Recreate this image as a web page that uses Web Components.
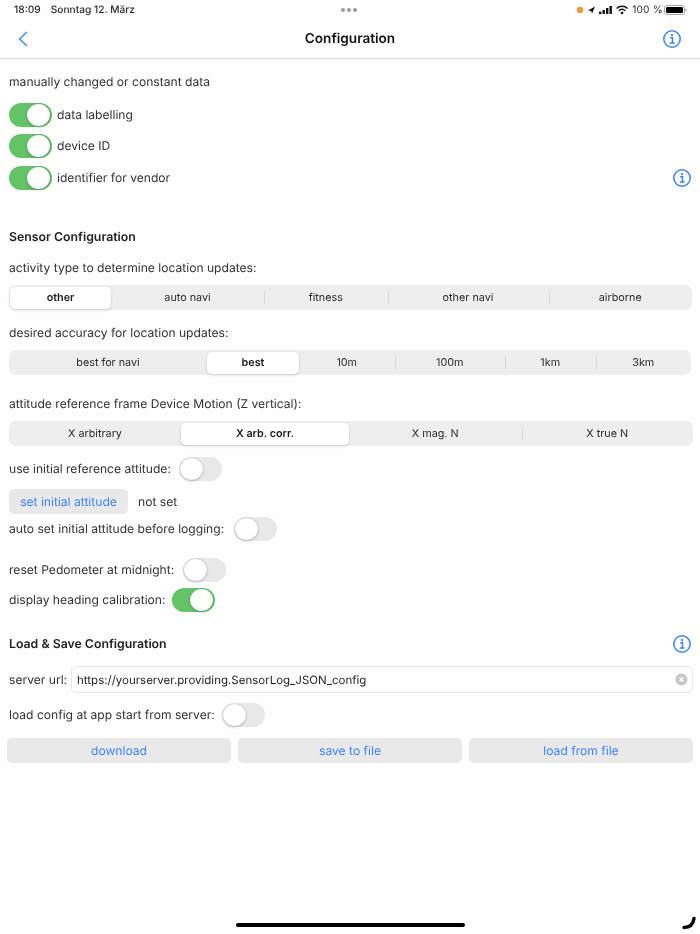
<!DOCTYPE html>
<html lang="de">
<head>
<meta charset="utf-8">
<title>Configuration</title>
<style>
  html, body { margin: 0; padding: 0; background: #fefefe; }
  body {
    width: 700px;
    height: 934px;
    overflow: hidden;
    position: relative;
    font-family: Inter, "Liberation Sans", sans-serif;
    font-size: 12.1px;
    color: #333;
    text-rendering: geometricPrecision;
    filter: blur(0.35px);
  }
  main { display: flex; flex-direction: column; padding: 0 7px 0 9px; }
</style>
</head>
<body>
<status-bar></status-bar>
<nav-bar title="Configuration"></nav-bar>
<main>
  <form-label style="margin-top:13px">manually changed or constant data</form-label>

  <switch-row on style="margin-top:11px;gap:5px">data labelling</switch-row>
  <switch-row on style="margin-top:7px;gap:5px">device ID</switch-row>
  <switch-row on info style="margin-top:8px;gap:5px">identifier for vendor</switch-row>

  <section-title style="margin-top:37px">Sensor Configuration</section-title>

  <form-label style="margin-top:11px">activity type to determine location updates:</form-label>
  <seg-control style="margin-top:7px;width:683px" items="other,auto navi,fitness,other navi,airborne" selected="0" widths="102,153,123.5,161,143.5"></seg-control>

  <form-label style="margin-top:13px">desired accuracy for location updates:</form-label>
  <seg-control style="margin-top:7px;width:682px" items="best for navi,best,10m,100m,1km,3km" selected="1" widths="198,92,95.5,110.5,90.5,95.5"></seg-control>

  <form-label style="margin-top:19px">attitude reference frame Device Motion (Z vertical):</form-label>
  <seg-control style="margin-top:7px;width:684px" items="X arbitrary,X arb. corr.,X mag. N,X true N" selected="1" widths="172,168,172.5,171.5"></seg-control>

  <switch-row before style="margin-top:11px;gap:8.5px">use initial reference attitude:</switch-row>

  <div style="margin-top:8px;display:flex;align-items:center;gap:10px">
    <action-button style="width:119px">set initial attitude</action-button>
    <span>not set</span>
  </div>

  <switch-row before style="margin-top:3px;gap:10px">auto set initial attitude before logging:</switch-row>
  <switch-row before style="margin-top:17px;gap:9px">reset Pedometer at midnight:</switch-row>
  <switch-row before on style="margin-top:6px">display heading calibration:</switch-row>

  <section-title info style="margin-top:22px">Load &amp; Save Configuration</section-title>

  <url-field style="margin-top:12px" label="server url:" value="https://yourserver.providing.SensorLog_JSON_config"></url-field>

  <switch-row before style="margin-top:10px">load config at app start from server:</switch-row>

  <div style="margin:11px 0 0 -2px;display:grid;grid-template-columns:224px 224px 224px;gap:7px">
    <action-button>download</action-button>
    <action-button>save to file</action-button>
    <action-button>load from file</action-button>
  </div>
</main>
<home-indicator></home-indicator>

<script>
const INFO_ICON = `
  <svg width="20" height="20" viewBox="0 0 20 20" fill="none" aria-hidden="true">
    <circle cx="10" cy="10" r="8.2" stroke="#3d85f5" stroke-width="1.5"/>
    <circle cx="10" cy="6.1" r="1.2" fill="#3d85f5"/>
    <path d="M8.1 8.7H10.5V13.9M7.8 14.1H12.6" stroke="#3d85f5" stroke-width="1.5"/>
  </svg>`;

class StatusBar extends HTMLElement {
  constructor() {
    super();
    this.attachShadow({ mode: "open" });
    this.shadowRoot.innerHTML = `
      <style>
        :host {
          display: flex;
          align-items: center;
          justify-content: space-between;
          height: 19px;
          padding: 0 12px 0 14px;
          font-size: 10.2px;
          color: #2a2a2a;
          position: relative;
        }
        .left { display: flex; gap: 10px; font-weight: 500; }
        .dots { position: absolute; left: 341px; top: 7.5px; display: flex; gap: 2px; }
        .dots i { width: 4px; height: 4px; border-radius: 50%; background: #9a9a9a; }
        .right { display: flex; align-items: center; gap: 2px; }
        .pct { margin-right: -1px; letter-spacing: 0.2px; }
      </style>
      <div class="left"><span>18:09</span><span>Sonntag 12. März</span></div>
      <div class="dots"><i></i><i></i><i></i></div>
      <div class="right">
        <svg width="54" height="12" viewBox="0 0 54 12">
          <circle cx="4" cy="6" r="3.2" fill="#f29a38"/>
          <path d="M12 6.4 L19 2.4 L16 9.8 L15.2 7 Z" fill="#111"/>
          <rect x="23" y="7.6" width="2.4" height="2.4" fill="#111"/>
          <rect x="26.5" y="6" width="2.4" height="4" fill="#111"/>
          <rect x="30" y="4" width="2.4" height="6" fill="#111"/>
          <rect x="33.5" y="2" width="2.4" height="8" fill="#111"/>
          <path d="M40.6 4.5a8 8 0 0 1 11 0M42.8 6.8a5 5 0 0 1 6.6 0" fill="none" stroke="#111" stroke-width="1.4"/>
          <circle cx="46.1" cy="9" r="1.3" fill="#111"/>
        </svg>
        <span class="pct">100 %</span>
        <svg width="24" height="12" viewBox="0 0 24 12">
          <rect x="0.5" y="1.5" width="20" height="9" rx="2.5" fill="#fff" stroke="#a8a8a8"/>
          <rect x="2" y="3" width="17" height="6" rx="1.2" fill="#000"/>
          <rect x="21.5" y="4.6" width="1.2" height="2.8" rx="0.6" fill="#a8a8a8"/>
        </svg>
      </div>
    `;
  }
}

class NavBar extends HTMLElement {
  constructor() {
    super();
    this.attachShadow({ mode: "open" });
    this.shadowRoot.innerHTML = `
      <style>
        :host {
          display: grid;
          grid-template-columns: 1fr auto 1fr;
          align-items: center;
          height: 39px;
          padding: 0 18px 0 18px;
          border-bottom: 1px solid #dcdcdc;
          box-sizing: content-box;
        }
        h1 { margin: 0; font-size: 13.6px; font-weight: 600; color: #111; }
        .end { justify-self: end; display: flex; }
        svg { display: block; }
      </style>
      <svg width="10" height="16" viewBox="0 0 10 16" fill="none">
        <path d="M9 1 L1.6 8 L9 15" stroke="#3d85f5" stroke-width="1.4"/>
      </svg>
      <h1 id="title"></h1>
      <div class="end">${INFO_ICON}</div>
    `;
  }

  connectedCallback() {
    this.shadowRoot.getElementById("title").textContent = this.getAttribute("title") || "";
  }
}

class FormLabel extends HTMLElement {
  constructor() {
    super();
    this.attachShadow({ mode: "open" });
    this.shadowRoot.innerHTML = `
      <style>
        :host {
          display: flex;
          align-items: center;
          box-sizing: border-box;
          height: 20px;
          padding-bottom: 1px;
          white-space: nowrap;
        }
      </style>
      <slot></slot>
    `;
  }
}

class SectionTitle extends HTMLElement {
  constructor() {
    super();
    this.attachShadow({ mode: "open" });
    this.shadowRoot.innerHTML = `
      <style>
        :host {
          display: flex;
          align-items: center;
          justify-content: space-between;
          height: 20px;
          padding-right: 1px;
          font-size: 12.3px;
          font-weight: 600;
          color: #222;
        }
        .text { padding-bottom: 1px; }
      </style>
      <span class="text"><slot></slot></span>
      <span id="end" style="display:flex"></span>
    `;
  }

  connectedCallback() {
    if (this.hasAttribute("info")) {
      this.shadowRoot.getElementById("end").innerHTML = INFO_ICON;
    }
  }
}

class IosSwitch extends HTMLElement {
  constructor() {
    super();
    this.attachShadow({ mode: "open" });
    this.shadowRoot.innerHTML = `
      <style>
        :host {
          display: block;
          flex: none;
          width: 43px;
          height: 24px;
          border-radius: 12px;
          background: #e8e8e8;
          position: relative;
        }
        :host([on]) { background: #62c466; }
        .knob {
          position: absolute;
          top: 1px;
          left: 1px;
          width: 23px;
          height: 22px;
          border-radius: 50%;
          background: #fff;
          box-shadow: 0 0 1px rgba(0,0,0,0.3), 0 1px 3px rgba(0,0,0,0.2);
        }
        :host([on]) .knob { left: 18px; }
      </style>
      <div class="knob"></div>
    `;
  }
}

class SwitchRow extends HTMLElement {
  constructor() {
    super();
    this.attachShadow({ mode: "open" });
    this.shadowRoot.innerHTML = `
      <style>
        :host {
          display: flex;
          align-items: center;
          gap: 7px;
          height: 24px;
          white-space: nowrap;
        }
        .text { padding-bottom: 1px; }
        .end { margin-left: auto; display: flex; padding-right: 1px; }
      </style>
      <div id="row" style="display:contents"></div>
    `;
  }

  connectedCallback() {
    const row = this.shadowRoot.getElementById("row");
    const on = this.hasAttribute("on") ? " on" : "";
    const sw = `<ios-switch${on}></ios-switch>`;
    const label = `<span class="text"><slot></slot></span>`;
    const end = this.hasAttribute("info") ? `<span class="end">${INFO_ICON}</span>` : "";
    row.innerHTML = this.hasAttribute("before") ? label + sw : sw + label + end;
  }
}

class SegControl extends HTMLElement {
  constructor() {
    super();
    this.attachShadow({ mode: "open" });
    this.shadowRoot.innerHTML = `
      <style>
        :host {
          display: grid;
          height: 25px;
          border-radius: 7px;
          background: #eeeeee;
          font-size: 10.8px;
          color: #2c2c2c;
        }
        .item {
          display: flex;
          align-items: center;
          justify-content: center;
          position: relative;
          white-space: nowrap;
        }
        .item.sep::before {
          content: "";
          position: absolute;
          left: 0;
          top: 6px;
          bottom: 6px;
          width: 1px;
          background: #d6d6d6;
        }
        .item.sel {
          margin: 1.5px 0;
          background: #fff;
          border-radius: 5px;
          font-weight: 600;
          color: #1c1c1c;
          box-shadow: 0 1px 3px rgba(0,0,0,0.16);
        }
        .item.sel.first { margin-left: 1px; }
      </style>
      <div id="items" style="display:contents"></div>
    `;
  }

  connectedCallback() {
    const items = (this.getAttribute("items") || "").split(",");
    const selected = Number(this.getAttribute("selected"));
    const widths = (this.getAttribute("widths") || "").split(",");
    this.style.gridTemplateColumns = widths.map((w) => `${w}px`).join(" ");
    const holder = this.shadowRoot.getElementById("items");

    items.forEach((text, i) => {
      const el = document.createElement("div");
      el.className = "item";
      if (i === selected) {
        el.classList.add("sel");
        if (i === 0) el.classList.add("first");
      } else if (i > 0 && i - 1 !== selected) {
        el.classList.add("sep");
      }
      el.textContent = text;
      holder.appendChild(el);
    });
  }
}

class ActionButton extends HTMLElement {
  constructor() {
    super();
    this.attachShadow({ mode: "open" });
    this.shadowRoot.innerHTML = `
      <style>
        :host {
          display: flex;
          align-items: center;
          justify-content: center;
          height: 25px;
          border-radius: 5px;
          background: #e9e9e9;
          color: #3d85f5;
          white-space: nowrap;
        }
      </style>
      <slot></slot>
    `;
  }
}

class UrlField extends HTMLElement {
  constructor() {
    super();
    this.attachShadow({ mode: "open" });
    this.shadowRoot.innerHTML = `
      <style>
        :host { display: flex; align-items: center; gap: 4px; height: 27px; }
        .box {
          flex: 1;
          height: 100%;
          box-sizing: border-box;
          display: flex;
          align-items: center;
          justify-content: space-between;
          padding: 0 4px 0 5px;
          border: 1px solid #e6e6e6;
          border-radius: 5px;
          background: #fff;
          font-size: 11.5px;
          color: #222;
        }
        svg { display: block; }
      </style>
      <span id="label"></span>
      <div class="box">
        <span id="value"></span>
        <svg width="13" height="13" viewBox="0 0 13 13">
          <circle cx="6.5" cy="6.5" r="6" fill="#c6c6c6"/>
          <path d="M4.5 4.5L8.5 8.5M8.5 4.5L4.5 8.5" stroke="#fff" stroke-width="1.3"/>
        </svg>
      </div>
    `;
  }

  connectedCallback() {
    this.shadowRoot.getElementById("label").textContent = this.getAttribute("label") || "";
    this.shadowRoot.getElementById("value").textContent = this.getAttribute("value") || "";
  }
}

// home indicator and the corner mark lie over the page
class HomeIndicator extends HTMLElement {
  constructor() {
    super();
    this.attachShadow({ mode: "open" });
    this.shadowRoot.innerHTML = `
      <style>
        :host { display: block; position: absolute; left: 0; right: 0; bottom: 0; height: 20px; }
        .bar {
          position: absolute;
          left: 236px;
          top: 9px;
          width: 229px;
          height: 4px;
          border-radius: 2px;
          background: #000;
        }
        svg { position: absolute; left: 680px; top: 0; }
      </style>
      <div class="bar"></div>
      <svg width="20" height="20" viewBox="0 0 20 20" fill="none">
        <path d="M4 13.5 C8.5 13.5 13 11.5 14 4.5" stroke="#000" stroke-width="3.4" stroke-linecap="round"/>
      </svg>
    `;
  }
}

customElements.define("status-bar", StatusBar);
customElements.define("nav-bar", NavBar);
customElements.define("form-label", FormLabel);
customElements.define("section-title", SectionTitle);
customElements.define("ios-switch", IosSwitch);
customElements.define("switch-row", SwitchRow);
customElements.define("seg-control", SegControl);
customElements.define("action-button", ActionButton);
customElements.define("url-field", UrlField);
customElements.define("home-indicator", HomeIndicator);
</script>
</body>
</html>
